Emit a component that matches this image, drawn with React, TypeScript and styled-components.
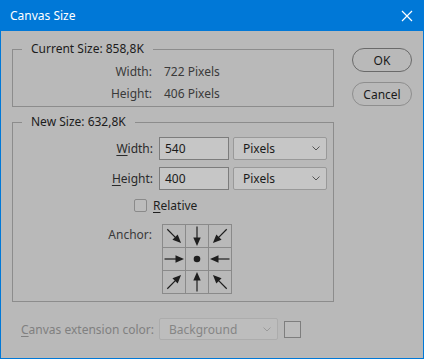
import React from "react";
import styled, { createGlobalStyle } from "styled-components";

const Global = createGlobalStyle`
  html, body { margin: 0; padding: 0; background: #b9b9b9; }
  * { box-sizing: border-box; }
  body { font-family: "Segoe UI", "Noto Sans", sans-serif; font-size: 12px; }
`;

const Window = styled.div`
  width: 424px;
  height: 359px;
  border: 1px solid #0078d7;
  border-top: none;
  background: #b9b9b9;
  display: flex;
  flex-direction: column;
`;

const TitleBar = styled.div`
  height: 31px;
  margin: 0 -1px;
  background: #0078d7;
  color: #ffffff;
  display: flex;
  align-items: center;
  justify-content: space-between;
  padding: 0 10px 0 10px;
  font-size: 12px;
`;

const Body = styled.div`
  flex: 1;
  display: flex;
  flex-direction: column;
  padding: 10px 11px 0 11px;
`;

const Top = styled.div`
  display: flex;
  align-items: flex-start;
`;

const LeftCol = styled.div`
  width: 323px;
  display: flex;
  flex-direction: column;
  gap: 7px;
`;

const RightCol = styled.div`
  margin-left: 18px;
  padding-top: 7px;
  display: flex;
  flex-direction: column;
  gap: 10px;
`;

const Group = styled.fieldset<{ $pt: number; $pb: number }>`
  margin: 0;
  border: 1px solid #8c8c8c;
  padding: ${(p) => p.$pt}px 0 ${(p) => p.$pb}px 0;
  min-width: 0;
`;

const Legend = styled.legend`
  margin-left: 9px;
  padding: 0 9px;
  line-height: 16px;
  color: #1c1c1c;
`;

const InfoGrid = styled.div`
  display: grid;
  grid-template-columns: 139px auto;
  column-gap: 12px;
  grid-auto-rows: 22px;
  align-items: center;
  color: #3a3a3a;
`;

const RightLabel = styled.span`
  text-align: right;
`;

const FormGrid = styled.div`
  display: grid;
  grid-template-columns: 140px 70px 92px;
  column-gap: 6px;
  row-gap: 7px;
  align-items: center;
  color: #2a2a2a;
`;

const Input = styled.div`
  height: 23px;
  border: 1px solid #7c7c7c;
  background: #c6c6c6;
  padding-left: 5px;
  display: flex;
  align-items: center;
  color: #1a1a1a;
`;

const Select = styled.div<{ $disabled?: boolean }>`
  height: ${(p) => (p.$disabled ? 22 : 23)}px;
  margin-left: ${(p) => (p.$disabled ? 0 : -2)}px;
  border: 1px solid ${(p) => (p.$disabled ? "#acacac" : "#999999")};
  background: ${(p) => (p.$disabled ? "#bdbdbd" : "#c6c6c6")};
  border-radius: 2px;
  padding: 0 6px 0 9px;
  display: flex;
  align-items: center;
  justify-content: space-between;
  color: ${(p) => (p.$disabled ? "#858585" : "#1a1a1a")};
`;

const U = styled.span`
  text-decoration: underline;
  text-underline-offset: 2px;
`;

const CheckRow = styled.div`
  grid-column: 1 / -1;
  display: flex;
  align-items: center;
  gap: 6px;
  padding-left: 121px;
  margin-top: 1px;
  height: 14px;
  color: #1f1f1f;
`;

const Box = styled.span<{ $size: number; $color: string }>`
  width: ${(p) => p.$size}px;
  height: ${(p) => p.$size}px;
  border: 1px solid ${(p) => p.$color};
  border-radius: 2px;
  background: #bcbcbc;
  display: inline-block;
`;

const AnchorRow = styled.div`
  grid-column: 1 / -1;
  display: grid;
  grid-template-columns: 139px auto;
  column-gap: 10px;
  margin-top: 5px;
  align-items: start;
`;

const AnchorLabel = styled.span`
  text-align: right;
  padding-top: 2px;
  color: #3a3a3a;
`;

const AnchorGrid = styled.div`
  display: grid;
  grid-template-columns: repeat(3, 22px);
  grid-template-rows: repeat(3, 22px);
  gap: 1px;
  padding: 1px;
  background: #8a8a8a;
  width: 70px;
`;

const Cell = styled.div`
  background: #b9b9b9;
  display: flex;
  align-items: center;
  justify-content: center;
`;

const Button = styled.div<{ $default?: boolean }>`
  width: 60px;
  height: 24px;
  border-radius: 12px;
  border: 1px solid ${(p) => (p.$default ? "#6a6a6a" : "#8e8e8e")};
  display: flex;
  align-items: center;
  justify-content: center;
  color: #1a1a1a;
  font-size: 12px;
`;

const Bottom = styled.div`
  display: flex;
  align-items: center;
  margin-top: 16px;
  padding-left: 9px;
`;

const DisabledLabel = styled.span`
  width: 138px;
  color: #808080;
`;

const Chevron = ({ color }: { color: string }) => (
  <svg width="8" height="5" viewBox="0 0 8 5">
    <path d="M0.5 0.5 L4 4 L7.5 0.5" fill="none" stroke={color} strokeWidth="1" />
  </svg>
);

const Arrow = ({ angle }: { angle: number }) => (
  <svg width="22" height="22" viewBox="0 0 22 22">
    <g transform={`rotate(${angle} 11 11)`}>
      <line x1="1.5" y1="11" x2="15" y2="11" stroke="#1e1e1e" strokeWidth="1.2" />
      <polygon points="21,11 12.5,7.3 12.5,14.7" fill="#1e1e1e" />
    </g>
  </svg>
);

const Dot = () => (
  <svg width="22" height="22" viewBox="0 0 22 22">
    <circle cx="11" cy="11" r="3.3" fill="#1e1e1e" />
  </svg>
);

const anchors: (number | null)[] = [45, 90, 135, 0, null, 180, -45, -90, -135];

export default function App() {
  return (
    <>
      <Global />
      <Window>
        <TitleBar>
          <span>Canvas Size</span>
          <svg width="12" height="12" viewBox="0 0 12 12" style={{ marginRight: 1 }}>
            <path d="M1 1 L11 11 M11 1 L1 11" stroke="#ffffff" strokeWidth="1.2" />
          </svg>
        </TitleBar>
        <Body>
          <Top>
            <LeftCol>
              <Group $pt={3} $pb={2}>
                <Legend>Current Size: 858,8K</Legend>
                <InfoGrid>
                  <RightLabel>Width:</RightLabel>
                  <span>722 Pixels</span>
                  <RightLabel>Height:</RightLabel>
                  <span>406 Pixels</span>
                </InfoGrid>
              </Group>
              <Group $pt={7} $pb={7}>
                <Legend>New Size: 632,8K</Legend>
                <FormGrid>
                  <RightLabel>
                    <U>W</U>idth:
                  </RightLabel>
                  <Input>540</Input>
                  <Select>
                    <span>Pixels</span>
                    <Chevron color="#555" />
                  </Select>
                  <RightLabel>
                    <U>H</U>eight:
                  </RightLabel>
                  <Input>400</Input>
                  <Select>
                    <span>Pixels</span>
                    <Chevron color="#555" />
                  </Select>
                  <CheckRow>
                    <Box $size={13} $color="#8a8a8a" />
                    <span>
                      <U>R</U>elative
                    </span>
                  </CheckRow>
                  <AnchorRow>
                    <AnchorLabel>Anchor:</AnchorLabel>
                    <AnchorGrid>
                      {anchors.map((a, i) => (
                        <Cell key={i}>{a === null ? <Dot /> : <Arrow angle={a} />}</Cell>
                      ))}
                    </AnchorGrid>
                  </AnchorRow>
                </FormGrid>
              </Group>
            </LeftCol>
            <RightCol>
              <Button $default>OK</Button>
              <Button>Cancel</Button>
            </RightCol>
          </Top>
          <Bottom>
            <DisabledLabel>
              <U>C</U>anvas extension color:
            </DisabledLabel>
            <Select $disabled style={{ width: 119 }}>
              <span>Background</span>
              <Chevron color="#9a9a9a" />
            </Select>
            <Box $size={17} $color="#7e7e7e" style={{ marginLeft: 6, borderRadius: 0 }} />
          </Bottom>
        </Body>
      </Window>
    </>
  );
}
